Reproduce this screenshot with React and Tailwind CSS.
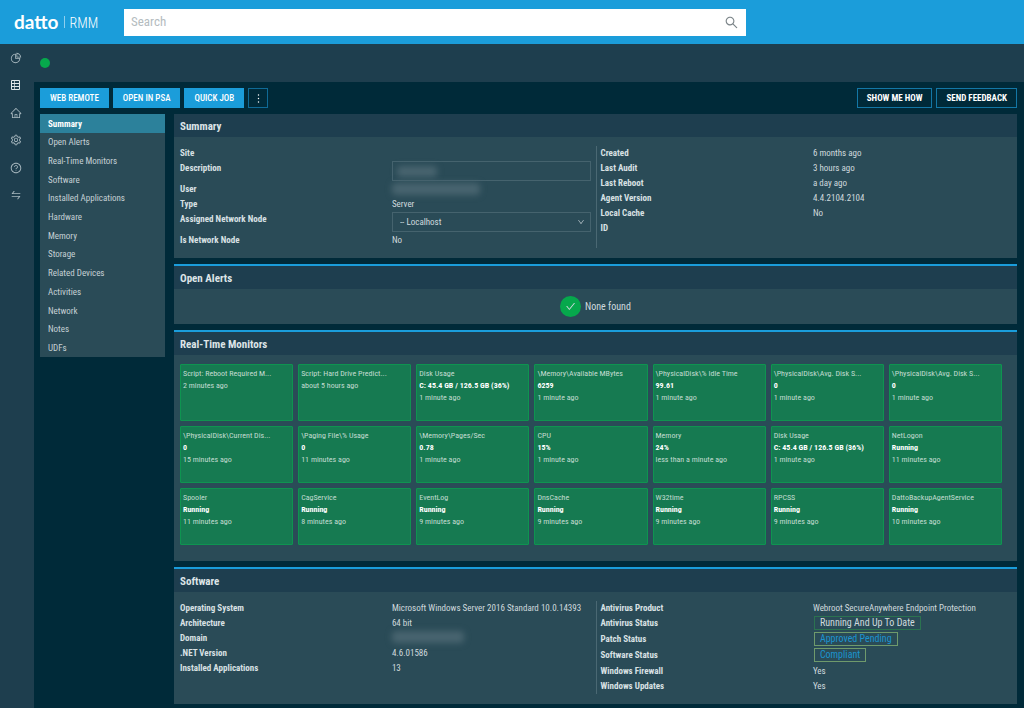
import React, { useState } from "react";
import {
  AiOutlinePieChart,
  AiOutlineHome,
  AiOutlineSetting,
  AiOutlineQuestionCircle,
  AiOutlineSwap,
  AiOutlineSearch,
  AiOutlineCheck,
  AiOutlineDown,
  AiOutlineMore,
} from "react-icons/ai";

// Rack with three units
function DeviceIcon({ size }) {
  return (
    <svg width={size} height={size} viewBox="0 0 12 12" fill="none" stroke="currentColor" className="block">
      <path d="M1.5 1.5h8v9h-8zM1.5 4.5h8M1.5 7.5h8" />
      <path d="M4.5 1.5v9" strokeWidth=".7" />
    </svg>
  );
}

const railItems = [
  { label: "Dashboard", Icon: AiOutlinePieChart },
  { label: "Devices", Icon: DeviceIcon, active: true },
  { label: "Sites", Icon: AiOutlineHome },
  { label: "Settings", Icon: AiOutlineSetting },
  { label: "Help", Icon: AiOutlineQuestionCircle },
  { label: "Switch", Icon: AiOutlineSwap },
];

const sections = [
  "Summary",
  "Open Alerts",
  "Real-Time Monitors",
  "Software",
  "Installed Applications",
  "Hardware",
  "Memory",
  "Storage",
  "Related Devices",
  "Activities",
  "Network",
  "Notes",
  "UDFs",
];

const monitors = [
  { name: "Script: Reboot Required M...", time: "2 minutes ago" },
  { name: "Script: Hard Drive Predict...", time: "about 5 hours ago" },
  { name: "Disk Usage", value: "C: 45.4 GB / 126.5 GB (36%)", time: "1 minute ago" },
  { name: "\\Memory\\Available MBytes", value: "6259", time: "1 minute ago" },
  { name: "\\PhysicalDisk\\% Idle Time", value: "99.61", time: "1 minute ago" },
  { name: "\\PhysicalDisk\\Avg. Disk S...", value: "0", time: "1 minute ago" },
  { name: "\\PhysicalDisk\\Avg. Disk S...", value: "0", time: "1 minute ago" },
  { name: "\\PhysicalDisk\\Current Dis...", value: "0", time: "15 minutes ago" },
  { name: "\\Paging File\\% Usage", value: "0", time: "11 minutes ago" },
  { name: "\\Memory\\Pages/Sec", value: "0.78", time: "1 minute ago" },
  { name: "CPU", value: "15%", time: "1 minute ago" },
  { name: "Memory", value: "24%", time: "less than a minute ago" },
  { name: "Disk Usage", value: "C: 45.4 GB / 126.5 GB (36%)", time: "1 minute ago" },
  { name: "NetLogon", value: "Running", time: "11 minutes ago" },
  { name: "Spooler", value: "Running", time: "11 minutes ago" },
  { name: "CagService", value: "Running", time: "8 minutes ago" },
  { name: "EventLog", value: "Running", time: "9 minutes ago" },
  { name: "DnsCache", value: "Running", time: "9 minutes ago" },
  { name: "W32time", value: "Running", time: "9 minutes ago" },
  { name: "RPCSS", value: "Running", time: "9 minutes ago" },
  { name: "DattoBackupAgentService", value: "Running", time: "10 minutes ago" },
];

// Panel with a title bar, optionally with the blue accent on top
function Panel({ title, accent = true, children }) {
  return (
    <section className={`bg-[#2a4b57] ${accent ? "border-t-2 border-[#1a9ddb]" : ""}`}>
      <h2 className="flex h-[23px] items-center bg-[#1e3e4f] px-[6px] pt-[3px] text-[11px] font-bold text-[#dde4e7]">
        {title}
      </h2>
      {children}
    </section>
  );
}

// One label / value line of a details list
function Row({ label, htmlFor, size = "min-h-[15px]", children }) {
  return (
    <div className={`grid grid-cols-[51fr_49fr] ${size}`}>
      <dt className="font-bold text-[#d9e1e4]">
        {htmlFor ? <label htmlFor={htmlFor}>{label}</label> : label}
      </dt>
      <dd className="pr-[5px] whitespace-nowrap">{children}</dd>
    </div>
  );
}

// Left and right halves split by a thin line
function Details({ left, right }) {
  return (
    <div className="grid grid-cols-2 pt-[9px] pb-[10px] text-[9px] leading-[14px] text-[#d0dade]">
      <dl className="pl-[6px]">{left}</dl>
      <dl className="border-l border-[#4a6873] pl-[4px]">{right}</dl>
    </div>
  );
}

// Blurred out private value
function Redacted({ className }) {
  return <span className={`block rounded-sm bg-[#48646f] blur-[3px] ${className}`} />;
}

function Tag({ className, children }) {
  return (
    <span className={`ml-px flex h-[14px] w-fit items-center border px-[5px] text-[10px] ${className}`}>
      {children}
    </span>
  );
}

function MonitorCard({ name, value, time }) {
  return (
    <li className="min-h-[57px] overflow-hidden rounded-[1px] border border-[#0e9450] bg-[#167a51] px-[2px] py-[3px] text-[8px] leading-[12px] whitespace-nowrap text-[#c3dcd1]">
      <p>{name}</p>
      {value && <p className="font-bold text-white">{value}</p>}
      <p>{time}</p>
    </li>
  );
}

export default function App() {
  const [search, setSearch] = useState("");
  const [activeSection, setActiveSection] = useState("Summary");
  const [description, setDescription] = useState("");

  return (
    <div className="flex min-h-screen flex-col bg-[#002a39] font-['Roboto_Condensed','Roboto',sans-serif]">
      {/* Top bar */}
      <header className="flex h-[44px] items-center bg-[#1b9dda]">
        <a href="#home" className="flex w-[124px] shrink-0 items-center pl-[14px] text-white">
          <span className="font-['Lato',sans-serif] text-[19px] leading-[20px] font-bold">datto</span>
          <span className="mx-[5px] h-[12px] w-px bg-[#8fcfee]" />
          <span className="pt-[2px] text-[14px] leading-[18px] font-light">RMM</span>
        </a>
        <form className="flex h-[27px] max-w-[622px] flex-1 items-center bg-white">
          <input
            type="text"
            aria-label="Search"
            placeholder="Search"
            value={search}
            onChange={(e) => setSearch(e.target.value)}
            className="min-w-0 flex-1 px-[7px] text-[13px] text-gray-700 outline-none placeholder:text-[#b4bcc0]"
          />
          <button type="button" aria-label="Run search" className="px-[7px] text-[#7b8488]">
            <AiOutlineSearch size={15} />
          </button>
        </form>
      </header>

      <div className="flex flex-1">
        {/* Icon rail */}
        <nav className="w-[34px] shrink-0 bg-[#1e3e4e] pt-[8px] pr-[2px]">
          <div className="flex h-[149px] flex-col items-center justify-between">
            {railItems.map(({ label, Icon, active }) => (
              <a
                key={label}
                href="#rail"
                aria-label={label}
                className={active ? "text-[#dfe6e9]" : "text-[#a9b9c0]"}
              >
                <Icon size={12} className="block" />
              </a>
            ))}
          </div>
        </nav>

        <div className="flex min-w-0 flex-1 flex-col">
          {/* Device status */}
          <div className="flex h-[38px] items-center bg-[#1e3e4e] px-[6px]">
            <span className="size-[10px] rounded-full bg-[#06a84c]" />
          </div>

          <main className="flex flex-col gap-[6px] pt-[6px] pr-[7px] pb-1 pl-[6px]">
            <div className="flex h-[20px] justify-between">
              <div className="flex gap-[4px] text-[9px] font-medium text-white">
                <button className="bg-[#1b9dda] px-[10px] pt-[2px]">WEB REMOTE</button>
                <button className="bg-[#1b9dda] px-[10px] pt-[2px]">OPEN IN PSA</button>
                <button className="bg-[#1b9dda] px-[10px] pt-[2px]">QUICK JOB</button>
                <button
                  aria-label="More actions"
                  className="flex w-[20px] items-center justify-center border border-[#0f6a96]"
                >
                  <AiOutlineMore size={13} />
                </button>
              </div>
              <div className="flex gap-[4px] text-[9px] font-bold text-white">
                <button className="border border-[#1377a6] px-[9px] pt-[2px]">SHOW ME HOW</button>
                <button className="border border-[#1377a6] px-[9px] pt-[2px]">SEND FEEDBACK</button>
              </div>
            </div>

            <div className="flex items-start gap-[9px]">
              {/* Section links */}
              <nav className="grid h-[243px] w-[125px] shrink-0 auto-rows-fr bg-[#2a4b57] text-[9px] text-[#c5d0d5]">
                {sections.map((section) => (
                  <a
                    key={section}
                    href="#section"
                    onClick={() => setActiveSection(section)}
                    className={`flex items-center px-[8px] pt-[2px] ${
                      section === activeSection ? "bg-[#2c819b] font-bold text-white" : ""
                    }`}
                  >
                    {section}
                  </a>
                ))}
              </nav>

              <div className="flex min-w-0 flex-1 flex-col gap-[6px]">
                <Panel title="Summary" accent={false}>
                  <Details
                    left={
                      <>
                        <Row label="Site" />
                        <Row label="Description" htmlFor="description" size="h-[21px]">
                          <div className="relative">
                            <input
                              id="description"
                              type="text"
                              value={description}
                              onChange={(e) => setDescription(e.target.value)}
                              className="block h-[20px] w-full border border-[#45636e] px-[6px] outline-none"
                            />
                            <Redacted className="pointer-events-none absolute top-[5px] left-[5px] h-[11px] w-[40px]" />
                          </div>
                        </Row>
                        <Row label="User">
                          <Redacted className="mt-px h-[12px] w-[88px]" />
                        </Row>
                        <Row label="Type">Server</Row>
                        <Row label="Assigned Network Node" htmlFor="network-node" size="h-[21px]">
                          <div className="relative">
                            <select
                              id="network-node"
                              className="block h-[20px] w-full appearance-none border border-[#45636e] bg-[#2a4b57] px-[7px] outline-none"
                            >
                              <option>-- Localhost</option>
                            </select>
                            <AiOutlineDown
                              size={8}
                              className="pointer-events-none absolute top-[6px] right-[6px] text-[#b4c0c6]"
                            />
                          </div>
                        </Row>
                        <Row label="Is Network Node">No</Row>
                      </>
                    }
                    right={
                      <>
                        <Row label="Created">6 months ago</Row>
                        <Row label="Last Audit">3 hours ago</Row>
                        <Row label="Last Reboot">a day ago</Row>
                        <Row label="Agent Version">4.4.2104.2104</Row>
                        <Row label="Local Cache">No</Row>
                        <Row label="ID" />
                      </>
                    }
                  />
                </Panel>

                <Panel title="Open Alerts">
                  <div className="flex h-[35px] items-center justify-center gap-[4px] text-[10px] text-[#d0dade]">
                    <span className="flex size-[21px] items-center justify-center rounded-full bg-[#06a84c]">
                      <AiOutlineCheck size={11} />
                    </span>
                    None found
                  </div>
                </Panel>

                <Panel title="Real-Time Monitors">
                  <ul className="grid grid-cols-7 gap-[5px] pt-[9px] pr-[15px] pb-[16px] pl-[6px]">
                    {monitors.map((monitor, index) => (
                      <MonitorCard key={index} {...monitor} />
                    ))}
                  </ul>
                </Panel>

                <Panel title="Software">
                  <Details
                    left={
                      <>
                        <Row label="Operating System">
                          Microsoft Windows Server 2016 Standard 10.0.14393
                        </Row>
                        <Row label="Architecture">64 bit</Row>
                        <Row label="Domain">
                          <Redacted className="h-[12px] w-[72px]" />
                        </Row>
                        <Row label=".NET Version">4.6.01586</Row>
                        <Row label="Installed Applications">13</Row>
                      </>
                    }
                    right={
                      <>
                        <Row label="Antivirus Product">
                          Webroot SecureAnywhere Endpoint Protection
                        </Row>
                        <Row label="Antivirus Status" size="h-[16px]">
                          <Tag className="border-[#2b7350]">Running And Up To Date</Tag>
                        </Row>
                        <Row label="Patch Status" size="h-[16px]">
                          <Tag className="border-[#6f9a6c] text-[#1b94cf]">Approved Pending</Tag>
                        </Row>
                        <Row label="Software Status" size="h-[16px]">
                          <Tag className="border-[#6f9a6c] text-[#1b94cf]">Compliant</Tag>
                        </Row>
                        <Row label="Windows Firewall">Yes</Row>
                        <Row label="Windows Updates">Yes</Row>
                      </>
                    }
                  />
                </Panel>
              </div>
            </div>
          </main>
        </div>
      </div>
    </div>
  );
}
